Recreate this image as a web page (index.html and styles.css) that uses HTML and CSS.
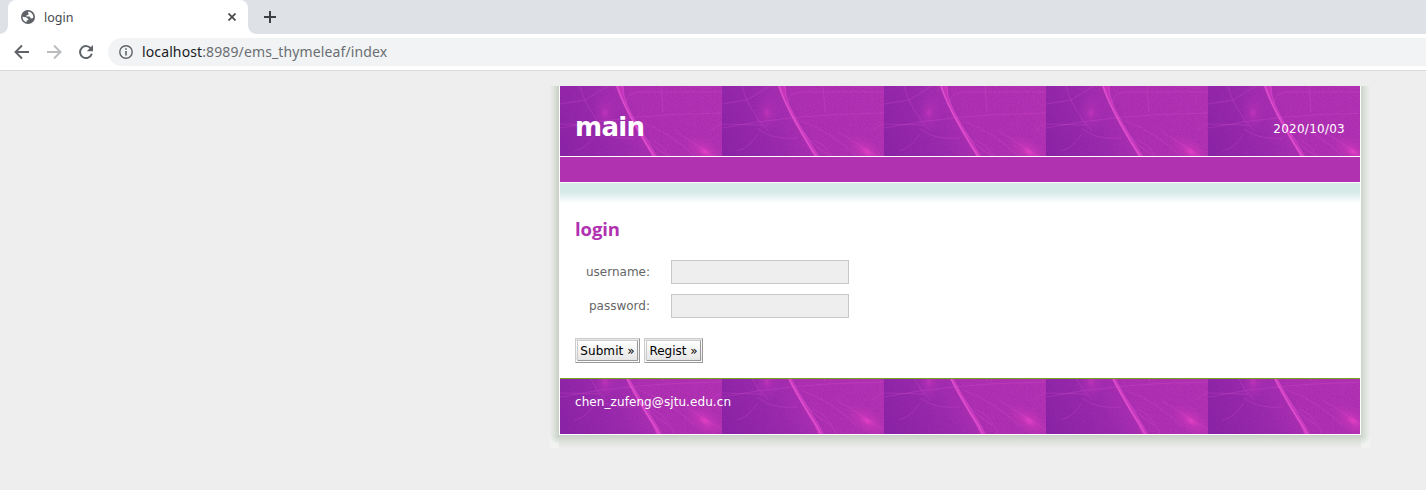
FILE: index.html
```html
<!DOCTYPE html>
<html lang="en">
<head>
<meta charset="utf-8">
<title>login</title>
<link rel="stylesheet" href="styles.css">
</head>
<body>
<div class="tabstrip">
  <div class="tab">
    <svg class="globe" viewBox="0 0 14 14"><circle cx="7" cy="7" r="7" fill="#5f6368"/><path d="M7.7 1.5C6.6 2.3 6.8 3.4 7.7 3.6L7.2 4.9 5.5 5.2 5.3 6.6H8.3C9.4 6.6 9 8.3 10 8.5L12.2 8.1C12.7 5.4 11 2.3 7.7 1.5ZM1.6 6.8 4.8 7.2C6 7.5 6 8.5 7.3 8.7V10L5.6 10.5V12.2C3.1 11.6 1.3 9.4 1.6 6.8Z" fill="#fff"/></svg>
    <span class="tab-title">login</span>
    <svg class="close" viewBox="0 0 8 8"><path d="M.5.5 7.5 7.5M7.5.5.5 7.5" stroke="#45494d" stroke-width="1.7"/></svg>
  </div>
  <svg class="plus" viewBox="0 0 12 12"><path d="M6 0V12M0 6H12" stroke="#3c4043" stroke-width="2"/></svg>
</div>
<div class="toolbar">
  <svg class="nav" viewBox="0 0 16 16"><path d="M15 8H2M8 1.5 1.5 8 8 14.5" fill="none" stroke="#5f6368" stroke-width="1.9"/></svg>
  <svg class="nav" viewBox="0 0 16 16"><path d="M1 8H14M8 1.5 14.5 8 8 14.5" fill="none" stroke="#babcbe" stroke-width="1.9"/></svg>
  <svg class="nav" viewBox="0 0 16 16"><path d="M13.2 5A6 6 0 1 0 13.8 9.8" fill="none" stroke="#5f6368" stroke-width="2"/><path d="M15 1V7.2H8.8Z" fill="#5f6368"/></svg>
  <div class="address">
    <svg class="info" viewBox="0 0 14 14"><circle cx="7" cy="7" r="6.2" fill="none" stroke="#5f6368" stroke-width="1.4"/><path d="M7 3.3V4.8M7 6V10.6" stroke="#5f6368" stroke-width="1.6"/></svg>
    <span class="url"><span class="host">localhost</span>:8989/ems_thymeleaf/index</span>
  </div>
</div>
<main class="page">
  <div class="shadow">
    <div class="wrap">
      <header class="header">
        <svg class="texture" width="800" height="70">
          <defs>
            <linearGradient id="base" x1="0" y1=".65" x2="1" y2=".35"><stop offset="0" stop-color="#8c23a6"/><stop offset=".35" stop-color="#9c2aad"/><stop offset=".56" stop-color="#b030b2"/><stop offset="1" stop-color="#b432b3"/></linearGradient>
            <radialGradient id="glow"><stop offset="0" stop-color="#ee42c8" stop-opacity=".85"/><stop offset=".3" stop-color="#d93abf" stop-opacity=".45"/><stop offset="1" stop-color="#c234b8" stop-opacity="0"/></radialGradient>
            <filter id="grain" x="0" y="0" width="1" height="1" color-interpolation-filters="sRGB"><feTurbulence type="fractalNoise" baseFrequency=".8" numOctaves="2" seed="4"/><feColorMatrix values="0 0 0 0 .42  0 0 0 0 .08  0 0 0 0 .6  1.6 0 0 0 -.62"/></filter>
            <pattern id="tile" width="162" height="100" patternUnits="userSpaceOnUse">
              <rect width="162" height="100" fill="url(#base)"/>
              <rect width="162" height="100" filter="url(#grain)" opacity=".32"/>
              <ellipse cx="45" cy="27" rx="14" ry="21" fill="url(#glow)" opacity=".5"/>
              <ellipse cx="145" cy="66" rx="25" ry="13" transform="rotate(35 145 66)" fill="url(#glow)"/>
              <path d="M56 0Q64 24 92 70L106 100H113L97 70Q72 31 66 15 63 7 64 0Z" fill="#d93cc5" opacity=".6"/>
              <g fill="none" stroke="#e252d0">
                <path d="M57 0Q65 25 94 70L110 100" stroke-width="1.5" opacity=".85"/>
                <path d="M63 0Q63 17 79 41T112 100M72 32Q84 56 108 70" stroke-width=".6" opacity=".5"/>
                <path d="M66 18Q66 7 78 6H162M101 0 103 26M20 0Q25 22 46 45M0 42Q70 28 162 27M0 38 40 39M15 65Q27 62 35 49M36 43Q50 54 75 52M79 35Q110 46 134 70M91 54Q111 60 121 100M115 45 162 75M150 45Q159 39 162 36M0 18 25 14 48 0" stroke-width=".7" opacity=".34"/>
              </g>
            </pattern>
          </defs>
          <rect width="800" height="70" fill="url(#tile)"/>
        </svg>
        <h1 class="brand">main</h1>
        <span class="date">2020/10/03</span>
      </header>
      <div class="menu"></div>
      <section class="content">
        <h2 class="title">login</h2>
        <form class="form">
          <label class="row"><span class="label">username:</span><input class="field" type="text"></label>
          <label class="row"><span class="label">password:</span><input class="field" type="password"></label>
          <div class="actions"><button class="button submit" type="button">Submit »</button><button class="button regist" type="button">Regist »</button></div>
        </form>
      </section>
      <footer class="footer">
        <svg class="texture" width="800" height="55" viewBox="0 24 800 55"><rect y="24" width="800" height="55" fill="url(#tile)"/></svg>
        <span class="email">chen_zufeng@sjtu.edu.cn</span>
      </footer>
    </div>
  </div>
</main>
</body>
</html>
```
FILE: styles.css
```css
* { box-sizing: border-box; }
body { margin: 0; height: 490px; overflow: hidden; background: #eee; font-family: "DejaVu Sans", sans-serif; font-size: 12px; }
svg { display: block; flex: none; }

.tabstrip { display: flex; height: 34px; padding-left: 8px; background: #dee1e6; }
.tab { position: relative; display: flex; align-items: center; width: 240px; height: 34px; padding: 0 12px 0 13px; background: #fff; border-radius: 8px 8px 0 0; }
.tab::before, .tab::after { content: ""; position: absolute; bottom: 0; width: 8px; height: 8px; }
.tab::before { left: -8px; background: radial-gradient(circle at 0 0, transparent 7.5px, #fff 8px); }
.tab::after { right: -8px; background: radial-gradient(circle at 100% 0, transparent 7.5px, #fff 8px); }
.globe { width: 14px; height: 14px; }
.tab-title { flex: 1; margin: 1px 0 0 9px; font: 12.5px/18px "Noto Sans", sans-serif; color: #45494d; }
.close { width: 8px; height: 8px; }
.plus { width: 12px; height: 12px; margin: 11px 0 0 16px; }

.toolbar { display: flex; align-items: center; height: 37px; padding-left: 14px; background: #fff; border-bottom: 1px solid #d9dadc; }
.nav { width: 16px; height: 16px; margin-right: 16px; }
.address { display: flex; flex: 1; align-items: center; height: 28px; margin-left: -2px; padding-left: 11px; background: #f1f3f4; border-radius: 14px 0 0 14px; }
.info { width: 14px; height: 14px; }
.url { margin-left: 9px; font: 14px/20px "Noto Sans", sans-serif; letter-spacing: .12px; color: #6a6e72; white-space: nowrap; }
.host { color: #202124; }

.page { padding: 15px 0 0 550px; }
.shadow { width: 820px; height: 362px; padding: 0 9px 13px; background:
  linear-gradient(to bottom, #c6cfc6, #dce1da 45%, #ededed) 9px 349px / 802px 13px no-repeat,
  linear-gradient(to left, #c6d0c6, #dce1da 50%, #ededed) 0 0 / 9px 349px no-repeat,
  linear-gradient(to right, #cbd4cb, #dfe4de 50%, #ededed) 811px 0 / 9px 349px no-repeat,
  radial-gradient(circle at 100% 0, #c6cfc6, #f2f3f1 10px) 0 349px / 9px 13px no-repeat,
  radial-gradient(circle at 0 0, #cbd4cb, #f2f3f1 10px) 811px 349px / 9px 13px no-repeat; }
.wrap { width: 802px; height: 349px; padding: 0 1px 1px; background: #fff; }
.texture { position: absolute; inset: 0; }
.header { position: relative; display: flex; align-items: center; justify-content: space-between; height: 70px; padding: 12px 15px 0; color: #fff; }
.brand { position: relative; margin: 0; font-size: 26px; line-height: 30px; letter-spacing: -.7px; }
.date { position: relative; margin-top: 4px; font-size: 12px; letter-spacing: .25px; }
.menu { height: 25px; margin: 1px 0; background: #b132b1; }
.content { height: 195px; padding: 32px 15px 0; background: linear-gradient(to bottom, #d6eae8 0, #d6eae8 9px, #fff 20px); }
.title { margin: 0; font: 700 18.5px/28px "Open Sans", sans-serif; letter-spacing: -.1px; color: #b132b1; }
.form { display: flex; flex-direction: column; gap: 10px; margin-top: 17px; }
.row { display: flex; align-items: center; height: 24px; color: #666; }
.label { width: 75px; text-align: right; }
.field { width: 178px; height: 24px; margin-left: 21px; padding: 2px; background: #eee; border: 1px solid #c8c8c8; border-radius: 0; }
.actions { display: flex; gap: 4px; margin-top: 10px; }
.button { height: 25px; padding: 1px 0 0; border: 3px double #999; border-color: #ccc #999 #999 #ccc; border-radius: 0; background: linear-gradient(#fff, #e5e5e5); color: #000; font: 12px/18px "DejaVu Sans", sans-serif; white-space: nowrap; }
.submit { width: 65px; letter-spacing: .1px; }
.regist { width: 59px; }
.footer { position: relative; height: 56px; padding: 15px 15px 0; border-top: 1px solid #70a519; color: #fff; }
.email { position: relative; display: block; line-height: 16px; letter-spacing: .08px; }
```
